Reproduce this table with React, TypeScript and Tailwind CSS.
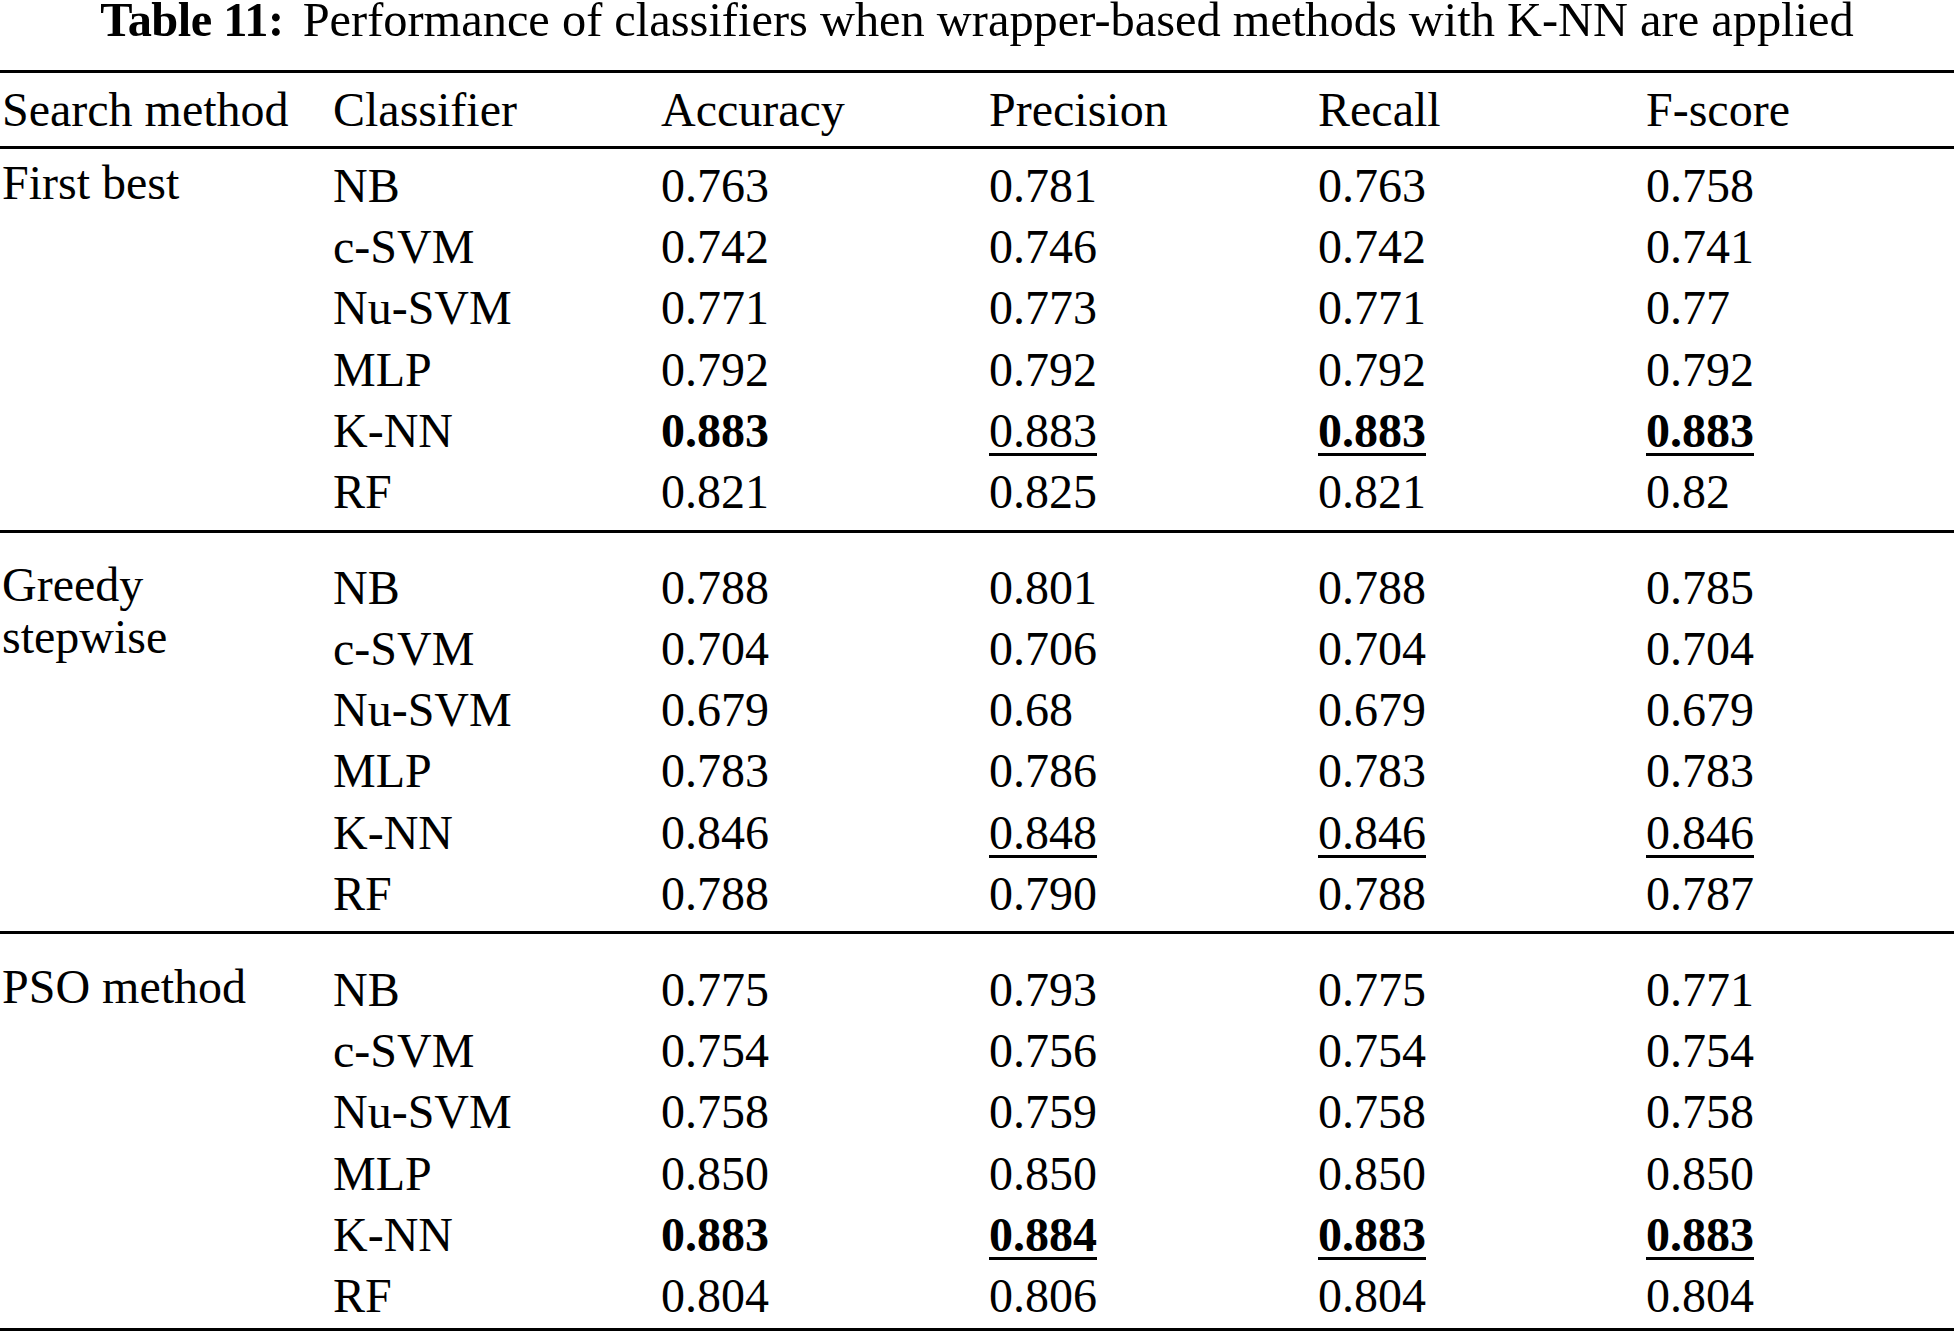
type Cell = { v: string; b?: boolean; u?: boolean };
type Row = { clf: string; cells: Cell[] };
type Section = { method: string; rows: Row[]; pad: string };

// "b:" = bold, "u:" = underlined, "bu:" = both
const c = (s: string): Cell => {
  const [flag, v] = s.includes(":") ? s.split(":") : ["", s];
  return { v, b: flag.includes("b"), u: flag.includes("u") };
};

const row = (clf: string, ...vals: string[]): Row => ({ clf, cells: vals.map(c) });

const sections: Section[] = [
  {
    method: "First best",
    pad: "pt-[5.5px] pb-[7.5px]",
    rows: [
      row("NB", "0.763", "0.781", "0.763", "0.758"),
      row("c-SVM", "0.742", "0.746", "0.742", "0.741"),
      row("Nu-SVM", "0.771", "0.773", "0.771", "0.77"),
      row("MLP", "0.792", "0.792", "0.792", "0.792"),
      row("K-NN", "b:0.883", "u:0.883", "bu:0.883", "bu:0.883"),
      row("RF", "0.821", "0.825", "0.821", "0.82"),
    ],
  },
  {
    method: "Greedy stepwise",
    pad: "pt-[23.5px] pb-[6.5px]",
    rows: [
      row("NB", "0.788", "0.801", "0.788", "0.785"),
      row("c-SVM", "0.704", "0.706", "0.704", "0.704"),
      row("Nu-SVM", "0.679", "0.68", "0.679", "0.679"),
      row("MLP", "0.783", "0.786", "0.783", "0.783"),
      row("K-NN", "0.846", "u:0.848", "u:0.846", "u:0.846"),
      row("RF", "0.788", "0.790", "0.788", "0.787"),
    ],
  },
  {
    method: "PSO method",
    pad: "pt-[25px] pb-[1px]",
    rows: [
      row("NB", "0.775", "0.793", "0.775", "0.771"),
      row("c-SVM", "0.754", "0.756", "0.754", "0.754"),
      row("Nu-SVM", "0.758", "0.759", "0.758", "0.758"),
      row("MLP", "0.850", "0.850", "0.850", "0.850"),
      row("K-NN", "b:0.883", "bu:0.884", "bu:0.883", "bu:0.883"),
      row("RF", "0.804", "0.806", "0.804", "0.804"),
    ],
  },
];

const cols = "grid grid-cols-[333px_328px_328px_329px_328px_1fr]";

function ValueCell({ cell }: { cell: Cell }) {
  return (
    <div className="leading-[61.3px]">
      <span
        className={`${cell.b ? "font-bold" : ""} ${
          cell.u ? "underline decoration-[length:3px] underline-offset-[6px]" : ""
        }`}
      >
        {cell.v}
      </span>
    </div>
  );
}

export default function App() {
  return (
    <div className="min-h-screen bg-white text-black font-['Liberation_Serif',serif] text-[48px]">
      <h1 className="text-center leading-[40px] text-[48.4px]">
        <span className="font-bold tracking-[-0.5px]">Table 11:</span>
        <span className="ml-[19px]">Performance of classifiers when wrapper-based methods with K-NN are applied</span>
      </h1>

      <div className="mt-[30px] border-t-[3px] border-b-[3px] border-black pt-[5.5px] pb-[6.5px]">
        <div className={`${cols} leading-[61.3px]`}>
          <div className="pl-[2px]">Search method</div>
          <div>Classifier</div>
          <div>Accuracy</div>
          <div>Precision</div>
          <div>Recall</div>
          <div>F-score</div>
        </div>
      </div>

      {sections.map(section => (
        <div key={section.method} className={`border-b-[3px] border-black ${section.pad}`}>
          <div className={`${cols} auto-rows-[61.3px]`}>
            <div className="row-span-6 pl-[2px] pt-[2px] leading-[52px] w-[300px]">
              {section.method}
            </div>
            {section.rows.map(r => [
              <div key={r.clf} className="leading-[61.3px]">
                {r.clf}
              </div>,
              ...r.cells.map((cell, i) => <ValueCell key={r.clf + i} cell={cell} />),
            ])}
          </div>
        </div>
      ))}
    </div>
  );
}
